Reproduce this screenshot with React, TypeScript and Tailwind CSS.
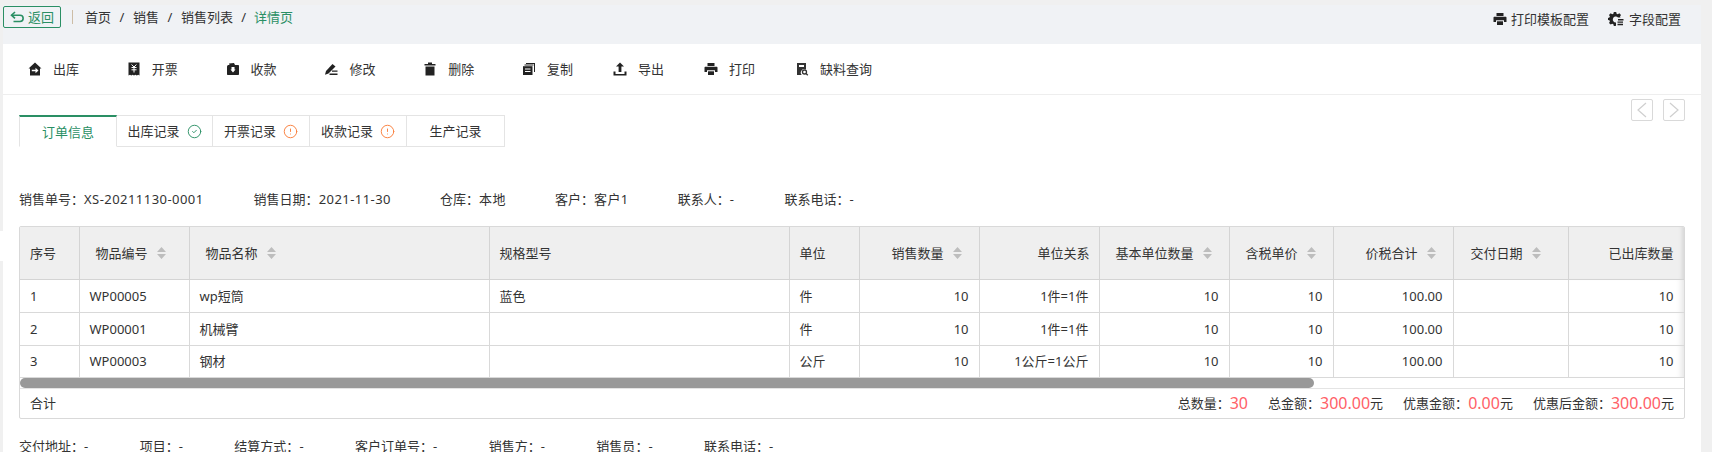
import { CircleCheck, CircleAlert } from "lucide-react";
import type { ReactNode } from "react";

const FONT = "font-['Noto_Sans','Noto_Sans_CJK_SC',sans-serif]";
const COLON = "\uFF1A";

const Svg = ({ children, w = 14 }: { children: ReactNode; w?: number }) => (
  <svg width={w} height={14} viewBox="0 0 14 14" fill="#222">
    {children}
  </svg>
);

const BackIcon = () => (
  <svg width={15} height={13} viewBox="0 0 15 13" fill="none" stroke="#2a8f64" strokeWidth="1.6">
    <path d="M5 1 1.500 4.200 5 7.400" />
    <path d="M1.500 4.200h8.500a3 3 0 0 1 0 6.300H3.500" />
  </svg>
);
const HomeIcon = () => (
  <Svg>
    <path d="M7 .5 13.500 6.500H12V13.500H2V6.500H.5Z" />
    <path d="M3.800 7.800h3.700V5.800l3 2.700-3 2.700V9.300H3.800Z" fill="#fff" />
  </Svg>
);
const BillIcon = () => (
  <Svg>
    <path d="M1.500 .5h11v13l-1.300-.8-1.400.8-1.400-.8-1.400.8-1.400-.8-1.300.8-1.300-.8-1.500.8Z" />
    <path d="M4.600 2.500 7 5l2.400-2.500M4.500 5.500h5M4.500 7.800h5M7 5v5.500" stroke="#fff" strokeWidth="1" fill="none" />
  </Svg>
);
const WalletIcon = () => (
  <Svg>
    <path d="M1 4.500 1.800 3h1.700L3 1.500 8 1l1 2h3.200c.5 0 .8.300.8.800V12c0 .6-.4 1-1 1H2c-.6 0-1-.4-1-1Z" />
    <path d="M5.500 5h3v2.500h1L7 10.500 4.500 7.500h1Z" fill="#fff" />
  </Svg>
);
const EditIcon = () => (
  <Svg>
    <path d="M1 12.800 2 9 8.500 2l3 2.500L4.500 11.500Z" />
    <path d="M8 8.500h5.500v1.300H8ZM5.500 11.500h8V13h-8Z" />
  </Svg>
);
const TrashIcon = () => (
  <Svg>
    <path d="M5 .5h4v1.500h3.500v1.500h-11V2H5Z" />
    <path d="M2.500 4.500h9V13.500h-9Z" />
  </Svg>
);
const CopyIcon = () => (
  <Svg>
    <path d="M4 1h9v9h-1V2H4Z" />
    <path d="M2.500 2.500h9v1h-9Z" />
    <path d="M1 4.200h9.500V13H1Z" />
    <path d="M3 7h5.500M3 9.500h5.500" stroke="#fff" strokeWidth="1" />
  </Svg>
);
const UploadIcon = () => (
  <Svg>
    <path d="M7 .5 11 4.500H8.400v5.500H5.600V4.500H3Z" />
    <path d="M.5 9.500h2V12h9V9.500h2V13.500H.5Z" />
  </Svg>
);
const PrintIcon = () => (
  <Svg>
    <path d="M3.500 1h7v3h-7Z" />
    <path d="M1.500 4.800h11c.6 0 1 .4 1 1V10h-2.500V8.300H3V10H.5V5.800c0-.6.4-1 1-1Z" />
    <path d="M4 9.300h6V13H4Z" />
  </Svg>
);
const DocSearchIcon = () => (
  <Svg>
    <path d="M2 1h9v6.500A3.500 3.500 0 0 0 6.800 13H2Z" fill="#333" />
    <path d="M4 3h5v2H4Z" fill="#fff" />
    <circle cx="9.500" cy="10" r="2" fill="none" stroke="#333" strokeWidth="1.300" />
    <path d="m11 11.500 1.800 1.800" stroke="#333" strokeWidth="1.300" />
  </Svg>
);
const GearIcon = () => (
  <svg width={16} height={14} viewBox="0 0 16 14" fill="#222">
    <path d="M5.800 0h2.400l.4 1.700 1.200.5L11.300 1.300 13 3l-1 1.400.5 1.100H10a3 3 0 1 0-2 5v2.500l-.2.9H5.800l-.4-1.700-1.200-.5-1.500.9L1 11l.9-1.500-.5-1.200L0 7.900V6l1.400-.4.5-1.200L1 3l1.700-1.700 1.500.9 1.200-.5Z" />
    <path d="M10 7h5.500v1.400H10ZM9.500 9.400H15v1.400H9.500ZM9.500 11.800H15v1.400H9.500Z" />
  </svg>
);

const SortMark = () => (
  <svg width={9} height={12} viewBox="0 0 9 12" fill="#bdbdbd" className="inline-block shrink-0">
    <path d="M4.500 0 9 5H0ZM0 7h9l-4.500 5Z" />
  </svg>
);

const Pager = ({ d }: { d: string }) => (
  <span className="flex h-[22px] w-[22px] items-center justify-center rounded-[2px] border border-[#d9d9d9]">
    <svg width={12} height={16} viewBox="0 0 12 16" fill="none" stroke="#cfcfcf" strokeWidth="1.200">
      <path d={d} />
    </svg>
  </span>
);

const actions = [
  { label: "出库", icon: <HomeIcon />, width: "w-[98.8px]" },
  { label: "开票", icon: <BillIcon />, width: "w-[98.8px]" },
  { label: "收款", icon: <WalletIcon />, width: "w-[98.8px]" },
  { label: "修改", icon: <EditIcon />, width: "w-[98.8px]" },
  { label: "删除", icon: <TrashIcon />, width: "w-[98.8px]" },
  { label: "复制", icon: <CopyIcon />, width: "w-[91px]" },
  { label: "导出", icon: <UploadIcon />, width: "w-[91px]" },
  { label: "打印", icon: <PrintIcon />, width: "w-[91px]" },
  { label: "缺料查询", icon: <DocSearchIcon />, width: "w-[91px]" },
];

type Col = { title: string; width: string; head: string; body: string; sort?: boolean };

const columns: Col[] = [
  { title: "序号", width: "w-[59px]", head: "pl-[10px]", body: "pl-[10px]" },
  { title: "物品编号", width: "w-[110px]", head: "pl-[16px]", body: "pl-[10px]", sort: true },
  { title: "物品名称", width: "w-[300px]", head: "pl-[16px]", body: "pl-[10px]", sort: true },
  { title: "规格型号", width: "w-[300px]", head: "pl-[10px]", body: "pl-[10px]" },
  { title: "单位", width: "w-[70px]", head: "pl-[10px]", body: "pl-[10px]" },
  { title: "销售数量", width: "w-[120px]", head: "pr-[17px] text-right", body: "pr-[10px] text-right", sort: true },
  { title: "单位关系", width: "w-[120px]", head: "pr-[9px] text-right", body: "pr-[10px] text-right" },
  { title: "基本单位数量", width: "w-[130px]", head: "pr-[17px] text-right", body: "pr-[10px] text-right", sort: true },
  { title: "含税单价", width: "w-[104px]", head: "pr-[17px] text-right", body: "pr-[10px] text-right", sort: true },
  { title: "价税合计", width: "w-[120px]", head: "pr-[17px] text-right", body: "pr-[10px] text-right", sort: true },
  { title: "交付日期", width: "w-[115px]", head: "pl-[17px]", body: "pl-[10px]", sort: true },
  {
    title: "已出库数量",
    width: "w-[116px]",
    head: "pr-[10px] text-right shadow-[inset_-5px_0_5px_-4px_rgba(0,0,0,0.14)]",
    body: "pr-[10px] text-right shadow-[inset_-7px_0_6px_-5px_rgba(0,0,0,0.12)]",
  },
];

const rows = [
  ["1", "WP00005", "wp短筒", "蓝色", "件", "10", "1件=1件", "10", "10", "100.00", "", "10"],
  ["2", "WP00001", "机械臂", "", "件", "10", "1件=1件", "10", "10", "100.00", "", "10"],
  ["3", "WP00003", "钢材", "", "公斤", "10", "1公斤=1公斤", "10", "10", "100.00", "", "10"],
];

const Tab = ({ label, active, mark, width }: { label: string; active?: boolean; mark?: ReactNode; width: string }) => (
  <div
    className={`flex items-center justify-center gap-[7px] ${width} border-r border-b border-[#e4e4e4] ${
      active ? "border-t-2 border-t-[#2a8f64] border-b-transparent border-l text-[#2a8f64]" : "border-t border-t-[#e4e4e4]"
    }`}
  >
    <span>{label}</span>
    {mark}
  </div>
);

const Amount = ({ label, value, unit }: { label: string; value: string; unit?: string }) => (
  <span className="flex items-center">
    <span>
      {label}
      {COLON}
    </span>
    <span className="text-[16px] text-[#ff5f67]">{value}</span>
    {unit && <span>{unit}</span>}
  </span>
);

const Field = ({ label, value }: { label: string; value: string }) => (
  <span className="whitespace-nowrap">
    {label}
    {COLON}
    <span className="tracking-[0.45px]">{value}</span>
  </span>
);

export default function App() {
  return (
    <div className={`flex h-screen w-full overflow-hidden bg-white text-[13px] leading-[20px] text-[#333] ${FONT}`}>
      {/* left gutter */}
      <div className="flex w-[3px] shrink-0 flex-col">
        <div className="h-[231px] bg-[#f0f0f0]" />
        <div className="h-[30px] bg-white" />
        <div className="flex-1 bg-[#f0f0f0]" />
      </div>

      <div className="flex min-w-0 flex-1 flex-col">
        <div className="h-[5px] shrink-0 bg-[#f0f0f0]" />

        {/* breadcrumb bar */}
        <header className="flex h-[39px] shrink-0 items-start justify-between bg-[#f0f2f5] pr-[20px]">
          <div className="mt-[1px] flex h-[22px] items-center">
            <button className="flex h-[22px] w-[58px] items-center justify-center gap-[3px] rounded-[2px] border border-[#2a8f64] text-[13px] text-[#2a8f64]">
              <BackIcon />
              <span>返回</span>
            </button>
            <span className="ml-[11px] h-[14px] w-px bg-[#cdbda6]" />
            <nav className="ml-[12px] flex items-center">
              <span>首页</span>
              <span className="w-[22px] text-center">/</span>
              <span>销售</span>
              <span className="w-[22px] text-center">/</span>
              <span>销售列表</span>
              <span className="w-[21px] text-center">/</span>
              <span className="text-[#2a8f64]">详情页</span>
            </nav>
          </div>
          <div className="mt-[4px] flex items-center">
            <PrintIcon />
            <span className="ml-[4px]">打印模板配置</span>
            <span className="ml-[19px]">
              <GearIcon />
            </span>
            <span className="ml-[5px]">字段配置</span>
          </div>
        </header>

        {/* action toolbar */}
        <div className="flex h-[51px] shrink-0 items-center border-b border-[#eeeeee] pl-[25px]">
          {actions.map((a) => (
            <div key={a.label} className={`flex shrink-0 items-center gap-[11px] ${a.width}`}>
              <span className="flex w-[14px] justify-center">{a.icon}</span>
              <span className="whitespace-nowrap">{a.label}</span>
            </div>
          ))}
        </div>

        <main className="flex shrink-0 flex-col pl-[16px] pr-[16px]">
          {/* tabs and record pager */}
          <div className="flex items-start justify-between">
            <div className="mt-[20px] flex h-[32px]">
              <Tab label="订单信息" active width="w-[98px]" />
              <Tab label="出库记录" width="w-[96px]" mark={<CircleCheck size={15} strokeWidth={1.5} color="#2a8f64" />} />
              <Tab label="开票记录" width="w-[97px]" mark={<CircleAlert size={15} strokeWidth={1.5} color="#f97d3a" />} />
              <Tab label="收款记录" width="w-[97px]" mark={<CircleAlert size={15} strokeWidth={1.5} color="#f97d3a" />} />
              <Tab label="生产记录" width="w-[98px]" />
            </div>
            <div className="mt-[4px] flex gap-[10px]">
              <Pager d="M10 1 2 8l8 7" />
              <Pager d="M2 1l8 7-8 7" />
            </div>
          </div>

          {/* order summary */}
          <div className="mt-[42px] flex">
            <Field label="销售单号" value="XS-20211130-0001" />
            <span className="ml-[50px]">
              <Field label="销售日期" value="2021-11-30" />
            </span>
            <span className="ml-[49px]">
              <Field label="仓库" value="本地" />
            </span>
            <span className="ml-[49px]">
              <Field label="客户" value="客户1" />
            </span>
            <span className="ml-[49px]">
              <Field label="联系人" value="-" />
            </span>
            <span className="ml-[50px]">
              <Field label="联系电话" value="-" />
            </span>
          </div>

          {/* line items */}
          <section className="mt-[17px] w-[1666px] overflow-hidden rounded-[2px] border border-[#d9d9d9]">
            <table className="w-[1664px] table-fixed border-collapse">
              <thead>
                <tr className="h-[52px] bg-[#efefef]">
                  {columns.map((c) => (
                    <th key={c.title} className={`${c.width} ${c.head} border-r border-b border-[#d4d4d4] text-left font-normal`}>
                      <span className="inline-flex items-center gap-[9px]">
                        {c.title}
                        {c.sort && <SortMark />}
                      </span>
                    </th>
                  ))}
                </tr>
              </thead>
              <tbody>
                {rows.map((r, i) => (
                  <tr key={r[0]} className={i === 2 ? "h-[32px]" : "h-[33px]"}>
                    {r.map((v, j) => (
                      <td key={j} className={`${columns[j].body} overflow-hidden border-r border-b border-[#d9d9d9] whitespace-nowrap`}>
                        {v}
                      </td>
                    ))}
                  </tr>
                ))}
              </tbody>
            </table>
            <div className="h-[10px]">
              <div className="h-full w-[1294px] rounded-full bg-[#999999]" />
            </div>
            <div className="flex h-[30px] items-center justify-between border-t border-[#e4e4e4] pr-[10px] pl-[10px]">
              <span>合计</span>
              <div className="flex items-center gap-[20px]">
                <Amount label="总数量" value="30" />
                <Amount label="总金额" value="300.00" unit="元" />
                <Amount label="优惠金额" value="0.00" unit="元" />
                <Amount label="优惠后金额" value="300.00" unit="元" />
              </div>
            </div>
          </section>

          {/* delivery details */}
          <div className="mt-[17px] flex">
            <Field label="交付地址" value="-" />
            <span className="ml-[51px]">
              <Field label="项目" value="-" />
            </span>
            <span className="ml-[51px]">
              <Field label="结算方式" value="-" />
            </span>
            <span className="ml-[51px]">
              <Field label="客户订单号" value="-" />
            </span>
            <span className="ml-[51px]">
              <Field label="销售方" value="-" />
            </span>
            <span className="ml-[51px]">
              <Field label="销售员" value="-" />
            </span>
            <span className="ml-[51px]">
              <Field label="联系电话" value="-" />
            </span>
          </div>
        </main>
      </div>

      {/* right gutter */}
      <div className="w-[11px] shrink-0 bg-[#f0f0f0]" />
    </div>
  );
}
